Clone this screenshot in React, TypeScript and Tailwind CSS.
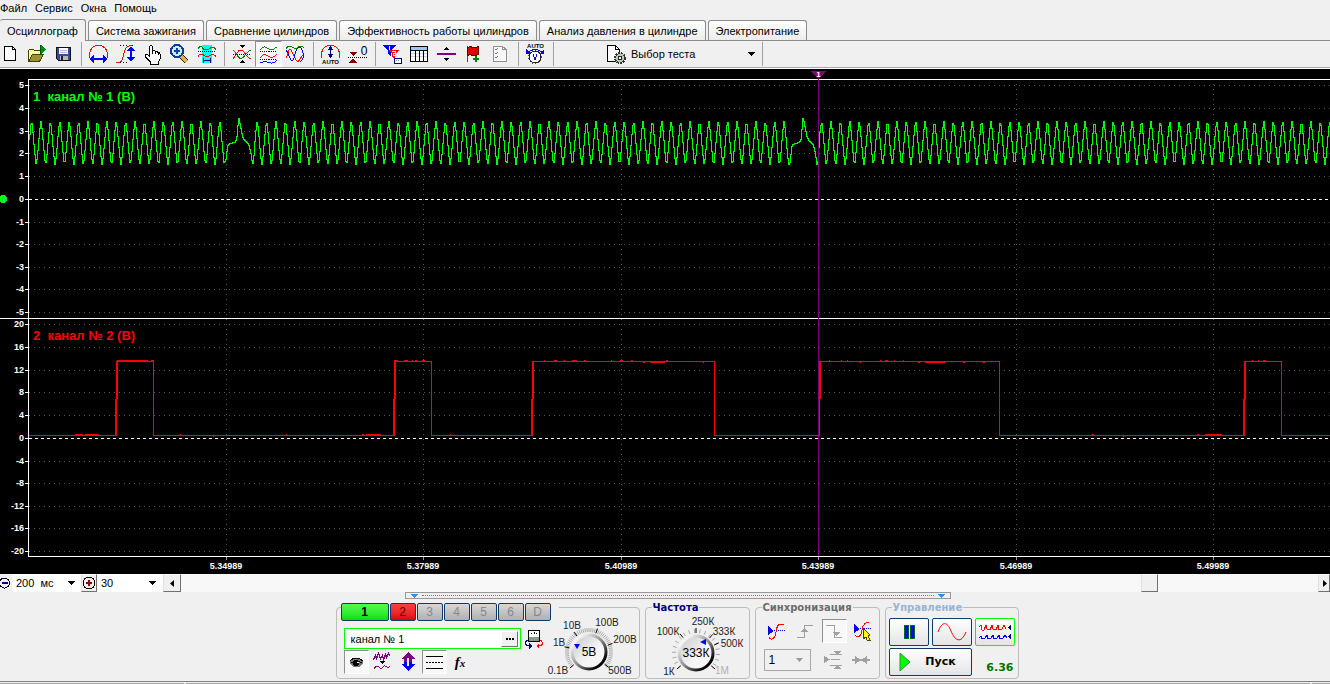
import React, { useState } from "react";
import clsx from "clsx";

type IconProps = { children: React.ReactNode; size?: number };

function Icon({ children, size = 26 }: IconProps) {
  return (
    <svg width={size} height={size} viewBox={`0 0 ${size} ${size}`} fill="none" shapeRendering="crispEdges" aria-hidden="true">
      {children}
    </svg>
  );
}

/* ---------- toolbar icons ---------- */

const NewIcon = () => (
  <Icon>
    <path d="M7.500 5.500h8l3 3v11h-11z" fill="#fff" stroke="#000" />
    <path d="M15.500 5.500v3h3" stroke="#000" />
  </Icon>
);

const OpenIcon = () => (
  <Icon>
    <path d="M4.500 20V9.500l1-1h4l1 1h6v4" fill="#ffffa0" stroke="#4a4000" />
    <path d="M4.500 20.500l4-7h11l-4 7z" fill="#9a9430" stroke="#4a4000" />
    <path d="M16.500 4v9" stroke="#005000" />
    <path d="M17 4l5 4.500-5 4.500z" fill="#008a20" />
  </Icon>
);

const SaveIcon = () => (
  <Icon>
    <path d="M5.500 6.500h14v13h-12l-2-2z" fill="#3a4a90" stroke="#101020" />
    <rect x="8" y="7" width="9" height="6" fill="#fff" />
    <path d="M9 9.500h7M9 11.500h7" stroke="#b0b8d0" />
    <rect x="9" y="15" width="8" height="4" fill="#b8b8b8" />
    <rect x="10" y="15" width="2" height="4" fill="#202020" />
  </Icon>
);

const HorizontalScaleIcon = () => (
  <Icon>
    <path d="M3.500 17V12.500Q5 4.500 12.500 4.500t9 8V17" stroke="#f00" />
    <path d="M6 18h13" stroke="#00f" strokeWidth="2" />
    <path d="M3 18l5-4v8zM22 18l-5-4v8z" fill="#00f" />
  </Icon>
);

const VerticalScaleIcon = () => (
  <Icon>
    <path d="M7 4.500h14M4 21.500h12" stroke="#000" strokeDasharray="1 2" />
    <path d="M3 21.500c7 0 6-2 7.500-8S13 4.500 19 4.500" stroke="#f00" />
    <path d="M18 8v11" stroke="#00f" strokeWidth="2" />
    <path d="M18 5l-4 5h8zM18 21l-4-5h8z" fill="#00f" />
  </Icon>
);

const HandIcon = () => (
  <Icon>
    <path
      d="M9.500 15V5.500l1-1h1l1 1V10l1.500-.5 1.500 1 1.500 0 1 1 1.500.5 1 1.500v4l-2 3.500v2h-8v-2l-5-5v-2l2-.5z"
      fill="#fff"
      stroke="#000"
    />
    <path d="M12.500 10v3M15.500 11v2M18.500 12v2" stroke="#000" />
  </Icon>
);

const ZoomIcon = () => (
  <Icon>
    <path d="M14 15l6 6" stroke="#302000" strokeWidth="5" />
    <path d="M14 15l6 6" stroke="#e0b050" strokeWidth="3" />
    <circle cx="10" cy="10" r="6" fill="#c8ecff" stroke="#123a9a" strokeWidth="2" />
    <path d="M10 7v6M7 10h6" stroke="#1440a0" strokeWidth="2" />
  </Icon>
);

const FitIcon = () => (
  <Icon>
    <rect x="8" y="4" width="10" height="18" fill="#0ff" />
    <path d="M4 7.500c2-3 4-2 5 0s5 2 7 0 4-2 6 1" stroke="#008000" />
    <path d="M4 10.500h18" stroke="#000" strokeDasharray="1 1" />
    <path d="M4 15.500c2-3 4-3 6-1s4 2 6 0 4-1 6 1" stroke="#f00" />
    <path d="M9 19.500h8M9.500 17v5M16.500 17v5" stroke="#000080" />
  </Icon>
);

const OverlayIcon = () => (
  <Icon>
    <path d="M4 17.500c3-1 4-9 8-8.500s5 8.500 10 8.500" stroke="#f00" />
    <path d="M4 9.500c3 0 4 8 8 8s5-8 10-8" stroke="#008000" />
    <path d="M4 13.500h18" stroke="#000" strokeDasharray="1 1" />
    <path d="M10 4h6l-3 3zM13 19l3 3h-6z" fill="#000" />
  </Icon>
);

const SeparateIcon = () => (
  <Icon>
    <path d="M4 8.500c2 0 3-3 5-3s4 3 7 3 4-2 6-3" stroke="#008000" />
    <path d="M4 16.500c2 0 3-3 5-3s4 3 7 3 4-2 6-3" stroke="#f00" />
    <path d="M4 22.500c2 0 3-2 5-2s4 2 7 2 4-2 6-3" stroke="#00f" />
    <path d="M4 10.500h18M4 18.500h18" stroke="#000" strokeDasharray="1 1" />
  </Icon>
);

const MixedIcon = () => (
  <Icon>
    <path d="M3 7.500c2-3 5-3 7-1s4 2 5 0 4-2 6 0" stroke="#008000" />
    <path d="M3 17c2-2 2-9 4-9s4 10 7 12 4-7 7-6" stroke="#f00" />
    <path d="M3 9c3 3 4 11 6 11s3-9 5-12 5-2 6 4-1 8-3 9" stroke="#00f" />
  </Icon>
);

const AutoScaleIcon = () => (
  <Icon>
    <path d="M3.500 17V12Q5 4.500 12.500 4.500t9 7.500V17" stroke="#f00" />
    <path d="M12.500 6v10" stroke="#000080" />
    <path d="M12.500 5l-3 4h6zM12.500 17l-3-4h6z" fill="#000080" />
    <text x="12.500" y="23" textAnchor="middle" fontSize="6" fontWeight="bold" fill="#000" fontFamily="Liberation Sans, sans-serif">AUTO</text>
  </Icon>
);

const ZeroIcon = () => (
  <Icon>
    <path d="M4 11h8l-4 4zM8 17l4 5H4z" fill="#800000" />
    <path d="M3 16.500h20" stroke="#000" strokeDasharray="1 1" />
    <text x="19" y="14" textAnchor="middle" fontSize="12" fill="#000" fontFamily="Liberation Sans, sans-serif">0</text>
  </Icon>
);

const FilterIcon = () => (
  <Icon>
    <path d="M3 4h13l-5 6v6l-3-4V10z" fill="#00f" />
    <path d="M9 9h10l-4 5v5l-3-3v-3z" fill="#f00" />
    <path d="M9.500 5v4M8.500 6.500h1" stroke="#fff" />
    <path d="M12 10.500h3v2h-2v2h3" stroke="#fff" />
    <path d="M14.500 17.500h7v5h-7z" fill="#fff" stroke="#000080" />
    <path d="M16 19.500h4" stroke="#888" strokeDasharray="1 1" />
  </Icon>
);

const TableIcon = () => (
  <Icon>
    <rect x="3.500" y="5.500" width="17" height="15" fill="#fff" stroke="#000" />
    <rect x="4" y="6" width="16" height="3" fill="#9cc4f4" />
    <path d="M4 12.500h16M4 15.500h16" stroke="#d0d0d0" />
    <path d="M4 9.500h16M8.500 9v11M12.500 9v11M16.500 9v11" stroke="#000" />
  </Icon>
);

const SplitIcon = () => (
  <Icon>
    <path d="M3 13h19" stroke="#800080" strokeWidth="2" />
    <path d="M12.500 6l3 3h-6zM12.500 20l3-3h-6z" fill="#000" />
  </Icon>
);

const FlagIcon = () => (
  <Icon>
    <path d="M6.500 5v16" stroke="#804000" />
    <path d="M6.500 6.500l3-1 2 1h3l3-1v8l-3 1h-3l-2-1-3 1z" fill="#e00000" stroke="#600000" />
    <path d="M15 15v6M12 18h6" stroke="#008000" strokeWidth="2" />
  </Icon>
);

const ChecklistIcon = () => (
  <Icon>
    <path d="M5.500 5.500h9l4 3v12h-13z" fill="#f8f8f8" stroke="#909090" />
    <path d="M14.500 5.500v3h4" stroke="#909090" />
    <path d="M7 8l1 1 2-2M7 12l1 1 2-2M7 16l1 1 2-2" stroke="#707070" />
  </Icon>
);

const AutoMeterIcon = () => (
  <Icon>
    <text x="12.500" y="7" textAnchor="middle" fontSize="6" fontWeight="bold" fill="#000" fontFamily="Liberation Sans, sans-serif">AUTO</text>
    <path d="M5 11Q12 6 19 11" stroke="#00f" />
    <path d="M3 8v5h5zM21 8v5h-5z" fill="#00f" />
    <circle cx="12" cy="16" r="6" fill="#fff" stroke="#222" />
    <circle cx="12" cy="16" r="6.500" stroke="#444" strokeDasharray="1 2" />
    <path d="M10 13.500l2 5 2-5" stroke="#00f" />
  </Icon>
);

const TestIcon = () => (
  <Icon>
    <path d="M4.500 4.500h8l4 4v12h-12z" fill="#fff" />
    <path d="M17 20.500H4.500v-16h8l4 4V12M12.500 4.500v4h4" stroke="#000" />
    <circle cx="17" cy="17" r="5" fill="#b8ccb8" />
    <circle cx="17" cy="17" r="5" stroke="#333" strokeDasharray="2 1" strokeWidth="2" />
    <circle cx="17" cy="17" r="2" fill="#fff" stroke="#222" />
  </Icon>
);

type Tool = { label: string; icon: React.FC; pressed?: boolean };

const toolGroups: Tool[][] = [
  [
    { label: "Новый", icon: NewIcon },
    { label: "Открыть", icon: OpenIcon },
    { label: "Сохранить", icon: SaveIcon },
  ],
  [
    { label: "Масштаб по горизонтали", icon: HorizontalScaleIcon },
    { label: "Масштаб по вертикали", icon: VerticalScaleIcon },
    { label: "Сдвиг", icon: HandIcon },
    { label: "Лупа", icon: ZoomIcon },
    { label: "Показать интервал", icon: FitIcon },
  ],
  [
    { label: "Наложить", icon: OverlayIcon },
    { label: "Разделить", icon: SeparateIcon, pressed: true },
    { label: "Совместить", icon: MixedIcon },
  ],
  [
    { label: "Автомасштаб", icon: AutoScaleIcon },
    { label: "Нулевая линия", icon: ZeroIcon },
  ],
  [
    { label: "Фильтр", icon: FilterIcon },
    { label: "Таблица", icon: TableIcon },
    { label: "Линейка", icon: SplitIcon },
    { label: "Добавить метку", icon: FlagIcon },
    { label: "Список", icon: ChecklistIcon },
  ],
  [{ label: "Автоизмерение", icon: AutoMeterIcon }],
];

function Separator() {
  return (
    <div className="flex w-2 shrink-0 justify-center py-px">
      <div className="w-px bg-[#a0a0a0]" />
    </div>
  );
}

function DownTriangle() {
  return (
    <svg width="7" height="4" viewBox="0 0 7 4" shapeRendering="crispEdges" aria-hidden="true">
      <path d="M0 0h7L3.500 4z" fill="currentColor" />
    </svg>
  );
}

/* ---------- chart ---------- */

const SPAN = 4000;
const CYCLE = 564.4;
const TOOTH = 9.41;

const gapShape: [number, number][] = [
  [-14, 161], [-13, 162], [-12, 153], [-11, 145], [-8, 143], [-4, 142], [-2, 139],
  [0, 117], [2, 126], [4, 137], [7, 141], [10, 144], [12, 151], [14, 165], [15, 160],
  [16, 145], [17, 131],
];

function sensorPath() {
  let d = "M29 70.5";
  for (let x = 29; x < SPAN; x++) {
    let u = (((x - 237.7) % CYCLE) + CYCLE) % CYCLE;
    if (u > CYCLE - 14) u -= CYCLE;
    let y = 142;
    if (u < 17) {
      for (let i = 1; i < gapShape.length; i++) {
        const [x0, y0] = gapShape[i - 1];
        const [x1, y1] = gapShape[i];
        if (u <= x1) {
          y = y0 + ((y1 - y0) * Math.max(0, u - x0)) / (x1 - x0);
          break;
        }
      }
    } else {
      const phase = (u - 18.500) / TOOTH;
      const frac = phase - Math.floor(phase);
      const triangle = Math.abs(frac - 0.5) * 4 - 1;
      y = 142.500 - 13 * triangle - 9 * Math.cos(phase * 2 * Math.PI);
    }
    d += `V${Math.round(y) - 69}.5H${x + 1}.5`;
  }
  return d;
}

const pulses: [number, number][] = [[116, 153], [394, 431], [532, 714], [819, 999], [1244, 1281]];

const noise: [number, number, number][] = [
  [75, 434, 8], [85, 434, 14], [180, 434, 1], [286, 434, 1], [213, 436, 1],
  [117, 360, 4], [122, 360, 26], [151, 360, 3],
  [362, 434, 2], [366, 434, 15], [450, 434, 1], [394, 360, 4], [404, 360, 4], [412, 360, 1], [415, 360, 2], [422, 360, 3],
  [544, 360, 1], [554, 360, 3], [564, 360, 1], [572, 360, 5], [584, 360, 2], [611, 360, 1], [620, 360, 3], [631, 360, 2],
  [643, 362, 2], [650, 362, 15], [666, 360, 2], [703, 362, 1],
  [829, 360, 1], [841, 360, 1], [847, 360, 1], [860, 362, 1], [880, 360, 1], [885, 360, 3], [894, 360, 1], [903, 360, 1],
  [918, 362, 2], [925, 362, 20], [963, 362, 2], [983, 362, 2],
  [1092, 434, 2], [1123, 436, 1], [1197, 434, 2], [1205, 434, 17], [1252, 360, 1], [1258, 360, 1], [1263, 360, 3],
];

const scaleTop: [number, string][] = [
  [85, "5"], [108, "4"], [131, "3"], [153, "2"], [176, "1"], [199, "0"],
  [222, "-1"], [244, "-2"], [267, "-3"], [289, "-4"], [312, "-5"],
];
const scaleBottom: [number, string][] = [
  [324, "20"], [347, "16"], [370, "12"], [392, "8"], [415, "4"], [438, "0"],
  [461, "-4"], [483, "-8"], [506, "-12"], [528, "-16"], [551, "-20"],
];
const times: [number, string][] = [
  [226, "5.34989"], [423, "5.37989"], [621, "5.40989"], [818, "5.43989"], [1016, "5.46989"], [1213, "5.49989"],
];

function Chart() {
  const bands = [...scaleTop, ...scaleBottom];
  let base = "M29 366.5";
  for (const [a, b] of pulses) base += `H${a}.5V292.5H${b}.5V366.5`;
  base += `H${SPAN}`;
  return (
    <svg
      id="scope"
      className="block h-[505px] w-full bg-black"
      shapeRendering="crispEdges"
      fontFamily="Liberation Sans, Arial, sans-serif"
      fontWeight="bold"
      role="img"
      aria-label="Осциллограмма"
    >
      <g stroke="#585858" strokeDasharray="1 4">
        {bands.filter(([, t]) => t !== "0").map(([y, t]) => (
          <line key={y + t} x1="29" x2="100%" y1={y - 68.500} y2={y - 68.500} />
        ))}
        {times.map(([x]) => (
          <line key={x} x1={x + 0.500} x2={x + 0.500} y1="15" y2="487" />
        ))}
      </g>
      <g stroke="#fff">
        <line x1="29" x2="100%" y1="130.500" y2="130.500" strokeDasharray="3 3" />
        <line x1="29" x2="100%" y1="369.500" y2="369.500" strokeDasharray="3 3" />
        <line x1="28" x2="100%" y1="10.500" y2="10.500" />
        <line x1="0" x2="100%" y1="249.500" y2="249.500" />
        <line x1="28" x2="100%" y1="487.500" y2="487.500" />
        <line x1="28.500" x2="28.500" y1="10" y2="488" />
        {bands.map(([y, t]) => (
          <line key={y + t} x1="25" x2="28" y1={y - 68.500} y2={y - 68.500} />
        ))}
      </g>
      {times.map(([x]) => (
        <line key={x} x1={x + 0.500} x2={x + 0.500} y1="488" y2="491" stroke="#999" />
      ))}
      <g fill="#fff" fontSize="9">
        {bands.map(([y, t]) => (
          <text key={y + t} x="24" y={y - 66} textAnchor="end">{t}</text>
        ))}
        {times.map(([x, t]) => (
          <text key={t} x={x} y="500" textAnchor="middle">{t}</text>
        ))}
      </g>
      <circle cx="3" cy="130" r="4" fill="#00ff20" />
      <path d={sensorPath()} fill="none" stroke="#0f0" />
      <path d={base} fill="none" stroke="#f00" />
      <g fill="#f00">
        {pulses.map(([x]) => (
          <g key={x}>
            <rect x={x - 1} y="330" width="2" height="37" />
            <rect x={x} y="292" width="2" height="38" />
          </g>
        ))}
        {noise.map(([x, y, w]) => (
          <rect key={`${x}-${y}`} x={x} y={y - 69} width={w} height="1" />
        ))}
      </g>
      <text x="33" y="32" fontSize="13" fill="#0f0" xmlSpace="preserve">1  канал № 1 (В)</text>
      <text x="33" y="271" fontSize="13" fill="#f00" xmlSpace="preserve">2  канал № 2 (В)</text>
      <line x1="818.500" x2="818.500" y1="8" y2="487" stroke="#800080" />
      <path d="M811 2h15l-7 8h-1z" fill="#800080" />
      <text x="818.500" y="8" fontSize="8" fill="#fff" textAnchor="middle">1</text>
    </svg>
  );
}

/* ---------- dials ---------- */

type DialLabel = { x: number; y: number; text: string; faded?: boolean };
type DialProps = {
  width: number;
  height: number;
  cx: number;
  cy: number;
  value: string;
  step: number;
  pointer: string;
  labels: DialLabel[];
  major: number[];
  name: string;
};

function Dial({ width, height, cx, cy, value, step, pointer, labels, major, name }: DialProps) {
  const ray = (deg: number, r1: number, r2: number) => {
    const a = (deg * Math.PI) / 180;
    return `M${cx + Math.sin(a) * r1} ${cy - Math.cos(a) * r1}L${cx + Math.sin(a) * r2} ${cy - Math.cos(a) * r2}`;
  };
  const minor: number[] = [];
  for (let d = -130; d <= 130; d += step) minor.push(d);
  return (
    <svg width={width} height={height} className="shrink-0" fontFamily="Liberation Sans, Arial, sans-serif" role="img" aria-label={`${name}: ${value}`}>
      <defs>
        <linearGradient id={`rim-${name}`} x1="0" y1="0" x2="1" y2="1">
          <stop offset="0.15" stopColor="#f4f4f4" />
          <stop offset="0.5" stopColor="#909090" />
          <stop offset="0.85" stopColor="#000" />
        </linearGradient>
        <linearGradient id={`face-${name}`} x1="0" y1="0" x2="1" y2="1">
          <stop offset="0.1" stopColor="#d0d0d0" />
          <stop offset="0.6" stopColor="#f6f6f6" />
        </linearGradient>
      </defs>
      <path d={minor.map((d) => ray(d, 20, 24)).join("")} stroke="#a8a8a8" />
      <path d={major.map((d) => ray(d, 20, 25)).join("")} stroke="#000" />
      <circle cx={cx} cy={cy} r="17" fill={`url(#face-${name})`} stroke={`url(#rim-${name})`} strokeWidth="3" />
      <path d={pointer} fill="#00f" />
      <text x={cx} y={cy + 4} fontSize="12" textAnchor="middle">{value}</text>
      <g fontSize="10">
        {labels.map((l) => (
          <text key={l.text} x={l.x} y={l.y} textAnchor="middle" fill={l.faded ? "#b0b0b0" : "#222"}>{l.text}</text>
        ))}
      </g>
    </svg>
  );
}

/* ---------- bottom panel ---------- */

function Group({ title, color, className, children }: { title: string; color: string; className: string; children: React.ReactNode }) {
  return (
    <section className={clsx("flex h-[72px] shrink-0 flex-col rounded border border-[#bcbcbc]", className)}>
      <h2 className={clsx("-mt-[6px] ml-1.5 w-fit bg-[#f0f0f0] px-px font-['DejaVu_Sans',sans-serif] text-[10px] leading-3 font-bold", color)}>{title}</h2>
      {children}
    </section>
  );
}

const pressedClass = "border border-t-[#909090] border-l-[#909090] border-r-white border-b-white bg-[#f8f8f8]";

function FlatButton({ label, pressed, children }: { label: string; pressed?: boolean; children: React.ReactNode }) {
  return (
    <button type="button" aria-label={label} aria-pressed={pressed} className={clsx("flex h-6 w-[25px] shrink-0 items-center justify-center", pressed && pressedClass)}>
      {children}
    </button>
  );
}

function ChannelGroup() {
  const [channel, setChannel] = useState("канал № 1");
  return (
    <section className="flex h-[72px] w-[304px] shrink-0 rounded border border-[#bcbcbc]">
      <div className="-mt-[5px] flex min-w-0 flex-1 flex-col pl-1">
        <div className="flex w-[218px] shrink-0 gap-px bg-[#f0f0f0]">
          {["1", "2", "3", "4", "5", "6", "D"].map((n) => (
            <button
              key={n}
              type="button"
              className={clsx(
                "h-[18px] rounded-[2px] border border-[#123a66] text-[12px] leading-4",
                n === "1" && "w-[48px] bg-linear-to-b from-[#50ff50] to-[#00e000] font-bold text-black",
                n === "2" && "w-[26px] bg-linear-to-b from-[#ff4040] to-[#e00000] text-[#500000]",
                n !== "1" && n !== "2" && "w-[26px] bg-linear-to-b from-[#d8d8d8] to-[#b0b0b0] text-[#888]",
              )}
            >
              {n}
            </button>
          ))}
        </div>
        <div className="mt-[7px] flex items-center gap-px pl-[3px]">
          <div className="flex h-[21px] w-[177px] shrink-0 items-center border border-[#0f0] bg-white pr-0.5">
            <input
              aria-label="Имя канала"
              value={channel}
              onChange={(e) => setChannel(e.target.value)}
              className="min-w-0 flex-1 px-1.5 text-[11px] outline-none"
            />
            <button type="button" aria-label="Настройка канала" className="flex h-4 w-[17px] items-center justify-center border border-t-white border-r-[#707070] border-b-[#707070] border-l-white bg-[#f0f0f0]">
              <svg width="9" height="2" shapeRendering="crispEdges" aria-hidden="true"><path d="M1 0h2v2H1zM4 0h2v2H4zM7 0h2v2H7z" /></svg>
            </button>
          </div>
          <button type="button" aria-label="Прибор" className="flex h-5 w-6 shrink-0 items-center justify-center">
            <Icon size={20}>
              <rect x="4.500" y="1.500" width="11" height="11" fill="#fff" stroke="#000" />
              <rect x="5" y="8" width="10" height="4" fill="#8a9a8a" />
              <path d="M7 5l1-1M10 3v2M13 5l-1-1" stroke="#000" />
              <path d="M4 11c-3 1-4 5 1 6" stroke="#000080" /><path d="M5 14v6l3-3z" fill="#000080" />
              <path d="M16 11c3 1 4 5-1 6" stroke="#f00" /><path d="M15 14v6l-3-3z" fill="#f00" />
            </Icon>
          </button>
        </div>
        <div className="mt-px flex gap-px pl-[3px]">
          <FlatButton label="Показать канал" pressed>
            <Icon size={20}>
              <path d="M4 9c3-4 9-4 13 0v3l-4 3H8l-4-3z" fill="#777" />
              <path d="M4 9c3-4 9-4 13 0M5 11c2-2 8-2 11 0" stroke="#000" />
              <circle cx="10" cy="11" r="3" fill="#000" />
              <rect x="11" y="10" width="2" height="1" fill="#fff" />
            </Icon>
          </FlatButton>
          <FlatButton label="Сглаживание">
            <Icon size={20}>
              <path d="M1.500 7l2-4 1 3 2-5 2 5 2-3 1 4 2-5 1 3 2-4 1 2M1.500 8l2-4 1 3 2-5 2 5 2-3 1 4 2-5 1 3 2-4 1 2" stroke="#800080" />
              <path d="M8 9h5l-2.500 3z" fill="#000" />
              <path d="M2 17c2-4 4-3 6-1s3-3 5-2 3 3 5 0" stroke="#800080" />
            </Icon>
          </FlatButton>
          <FlatButton label="Инвертировать">
            <Icon size={20}>
              <path d="M10 0l7 7h-3v3H6V7H3z" fill="#800080" /><path d="M10 19l7-7h-3v-2H6v2H3z" fill="#00f" />
              <path d="M10 6v8" stroke="#f0f0f0" strokeWidth="2" />
            </Icon>
          </FlatButton>
          <FlatButton label="Уровни" pressed>
            <Icon size={20}>
              <path d="M2 4.500h17M2 16.500h17" stroke="#000" />
              <path d="M2 10.500h17" stroke="#000" strokeDasharray="2 1" />
            </Icon>
          </FlatButton>
          <FlatButton label="Функция">
            <span className="font-['Liberation_Serif',serif] text-[15px] leading-4 font-bold italic">f<span className="text-[11px]">x</span></span>
          </FlatButton>
        </div>
      </div>
      <Dial
        name="Чувствительность"
        width={92}
        height={70}
        cx={42}
        cy={44}
        value="5В"
        step={5}
        major={[-130, -78, -37, 20, 70, 128]}
        pointer="M27 36h6l-3 5z"
        labels={[
          { x: 11, y: 66, text: "0.1В" },
          { x: 12, y: 38, text: "1В" },
          { x: 25, y: 21, text: "10В" },
          { x: 60, y: 18, text: "100В" },
          { x: 78, y: 35, text: "200В" },
          { x: 73, y: 66, text: "500В" },
        ]}
      />
    </section>
  );
}

function PlayButton({ label, className, children }: { label: string; className?: string; children: React.ReactNode }) {
  return (
    <button type="button" aria-label={label} className={clsx("flex h-7 w-10 items-center justify-center rounded-[2px] border bg-linear-to-b from-white to-[#e4e4e4]", className)}>
      {children}
    </button>
  );
}

const bevel = "border border-t-white border-l-[#e0e0e0] border-r-[#707070] border-b-[#707070] bg-[#f0f0f0]";

export default function App() {
  const tabs = ["Осциллограф", "Система зажигания", "Сравнение цилиндров", "Эффективность работы цилиндров", "Анализ давления в цилиндре", "Электропитание"];
  const [active, setActive] = useState(0);

  return (
    <div className="flex min-h-screen w-full flex-col overflow-hidden bg-[#f0f0f0] font-['Liberation_Sans',Arial,sans-serif] text-[11px] leading-[14px] text-black">
      <nav className="flex h-[19px] gap-2">
        {["Файл", "Сервис", "Окна", "Помощь"].map((m) => (
          <button key={m} type="button" className="h-[15px]">{m}</button>
        ))}
      </nav>

      <div role="tablist" className="flex h-[22px] items-end gap-0.5 border-b border-[#8c8c8c]">
        {tabs.map((t, i) => (
          <button
            key={t}
            type="button"
            role="tab"
            aria-selected={i === active}
            onClick={() => setActive(i)}
            className={clsx(
              "rounded-t-[3px] border border-b-0 border-[#8c8c8c] whitespace-nowrap",
              i === active ? "-mb-px h-[22px] border-l-0 bg-[#f0f0f0] px-[7px]" : "h-5 bg-linear-to-b from-white to-[#ececec] px-[7px]",
            )}
          >
            {t}
          </button>
        ))}
      </div>

      <div role="toolbar" aria-label="Инструменты" className="-ml-1 flex h-[26px]">
        {toolGroups.map((g, gi) => (
          <React.Fragment key={gi}>
            {g.map(({ label, icon: Glyph, pressed }) => (
              <button key={label} type="button" aria-label={label} aria-pressed={pressed} className={clsx("flex w-[27px] shrink-0 items-center justify-center", pressed && pressedClass)}>
                <Glyph />
              </button>
            ))}
            <Separator />
          </React.Fragment>
        ))}
        <button type="button" aria-haspopup="menu" className="flex w-[201px] items-center pr-[3px] pl-[46px]">
          <TestIcon />
          <span className="flex-1 pl-0.5 text-left">Выбор теста</span>
          <DownTriangle />
        </button>
        <Separator />
      </div>
      <div className="h-0.5 border-t border-[#a8a8a8] bg-white" />

      <Chart />

      <div className="flex h-[18px] bg-white">
        <button type="button" aria-label="Уменьшить развёртку" className="flex w-3 items-center justify-end bg-[#f0f0f0]">
          <Icon size={12}><circle cx="4.500" cy="6" r="5" stroke="#000" fill="#f0f0f0" /><path d="M2 6h6" stroke="#000080" strokeWidth="2" /></Icon>
        </button>
        <button type="button" aria-label="Развёртка" className="flex w-[69px] items-center justify-between pr-1.5 pl-1">
          <span className="whitespace-pre">200  мс</span>
          <DownTriangle />
        </button>
        <button type="button" aria-label="Увеличить развёртку" className={clsx("flex w-4 items-center justify-center", bevel)}>
          <Icon size={14}><circle cx="7" cy="7" r="6" stroke="#000" /><path d="M4 7h6M7 4v6" stroke="#900000" strokeWidth="2" /></Icon>
        </button>
        <button type="button" aria-label="Число кадров" className="flex w-[66px] items-center justify-between pr-[7px] pl-1">
          <span>30</span>
          <DownTriangle />
        </button>
        <div role="scrollbar" aria-label="Прокрутка" aria-controls="scope" aria-valuenow={86} className="flex flex-1 bg-[#f8f8f8]">
          <button type="button" aria-label="Назад" className={clsx("flex w-[18px] items-center justify-center", bevel)}>
            <svg width="4" height="7" aria-hidden="true"><path d="M4 0v7L0 3.500z" /></svg>
          </button>
          <div className="flex-[960]" />
          <div className={clsx("w-[17px]", bevel)} />
          <div className="flex-[160]" />
          <button type="button" aria-label="Вперёд" className={clsx("flex w-3 items-center justify-end pr-0.5", bevel)}>
            <svg width="4" height="7" aria-hidden="true"><path d="M0 0v7l4-3.500z" /></svg>
          </button>
        </div>
      </div>

      <div className="flex justify-center pl-[26px]">
        <div className="flex h-[7px] w-[546px] items-center justify-between border border-[#989898] px-[5px] text-[#3090f0]">
          <DownTriangle />
          <div className="mx-1 flex-1 border-t border-dotted border-[#3090f0]" />
          <DownTriangle />
        </div>
      </div>

      <div className="mt-2 flex justify-center gap-[5px] pl-6">
        <ChannelGroup />

        <Group title="Частота" color="text-[#000080]" className="w-[105px]">
          <Dial
            name="Частота"
            width={103}
            height={64}
            cx={50}
            cy={39}
            value="333К"
            step={14}
            major={[-130, -40, 0, 42, 66, 130]}
            pointer="M54 28l6-3v6z"
            labels={[
              { x: 22, y: 21, text: "100К" },
              { x: 57, y: 11, text: "250К" },
              { x: 78, y: 21, text: "333К" },
              { x: 86, y: 33, text: "500К" },
              { x: 23, y: 61, text: "1К" },
              { x: 76, y: 60, text: "1М", faded: true },
            ]}
          />
        </Group>

        <Group title="Синхронизация" color="text-[#6c6c6c]" className="w-[125px]">
          <div className="mt-[5px] flex gap-1 pl-2">
            <FlatButton label="Синхронизация по уровню">
              <Icon size={20}>
                <path d="M2 5l6 5-6 4z" fill="#00f" /><path d="M8 9.500h11" stroke="#00f" strokeDasharray="1 1" />
                <path d="M3 16c2 4 6 2 7-5s2-8 8-8" stroke="#f00" />
              </Icon>
            </FlatButton>
            <FlatButton label="По фронту">
              <Icon size={20}><path d="M2 16.500h7.500v-12H18M9.500 4v8" stroke="#a0a0a0" /><path d="M9.500 7l4 4h-8z" fill="#a0a0a0" /></Icon>
            </FlatButton>
            <FlatButton label="По спаду" pressed>
              <Icon size={20}><path d="M2 4.500h8.500v12H18" stroke="#a0a0a0" /><path d="M12.500 15l-4-4h8z" fill="#a0a0a0" /></Icon>
            </FlatButton>
            <FlatButton label="Выбрать уровень">
              <Icon size={20}>
                <path d="M1 3l6 5-6 4z" fill="#00f" /><path d="M7 7.500h12" stroke="#00f" strokeDasharray="1 1" />
                <path d="M2 14c3 4 6 1 7-5s3-8 7-8" stroke="#f00" />
                <path d="M10 7l7 7-2 1 2 4h-3l-1-3-3 2z" fill="#ff0" stroke="#504000" />
              </Icon>
            </FlatButton>
          </div>
          <div className="mt-[5px] flex items-center pl-2">
            <select aria-label="Канал синхронизации" className="mr-2.5 h-[22px] w-[47px] appearance-none border border-[#a8a8a8] bg-[url('data:image/svg+xml,%3Csvg%20xmlns=%22http://www.w3.org/2000/svg%22%20width=%227%22%20height=%224%22%3E%3Cpath%20d=%22M0%200h7L3.5%204z%22%20fill=%22%23999%22/%3E%3C/svg%3E')] bg-[right_7px_center] bg-no-repeat px-1 text-[12px]">
              <option>1</option>
            </select>
            <FlatButton label="Уровень">
              <Icon size={20}><path d="M7 4.500h12M7 15.500h12M8 9.500h9" stroke="#a0a0a0" /><path d="M1 6l6 3.500L1 13zM11 1h7l-3.500 4zM11 19h7l-3.500-4z" fill="#a0a0a0" /></Icon>
            </FlatButton>
            <span className="ml-[3px]">
              <FlatButton label="Центр">
                <Icon size={20}><path d="M1 10h18" stroke="#a0a0a0" strokeWidth="2" /><path d="M4 6l6 4-6 4zM16 6l-6 4 6 4z" fill="#a0a0a0" /></Icon>
              </FlatButton>
            </span>
          </div>
        </Group>

        <Group title="Управление" color="text-[#9ab4d4]" className="w-[134px]">
          <div className="mt-1 flex gap-[3px] pl-[3px]">
            <PlayButton label="Пауза" className="border-[#123a66]">
              <svg width="12" height="16" shapeRendering="crispEdges" aria-hidden="true">
                <rect x="1" y="1" width="4" height="13" fill="#00f" stroke="#006030" /><rect x="7" y="1" width="4" height="13" fill="#00f" stroke="#006030" />
              </svg>
            </PlayButton>
            <PlayButton label="Одиночный" className="border-[#123a66]">
              <svg width="30" height="22" fill="none" aria-hidden="true"><path d="M1 11C5 0 10 0 14 10s10 13 15 1" stroke="#f00" /></svg>
            </PlayButton>
            <PlayButton label="Непрерывный" className="border-[#0f0]">
              <svg width="34" height="22" fill="none" shapeRendering="crispEdges" aria-hidden="true">
                <path d="M1 6l2-2 1 5h2l2-5 1 4 3 1 2-5 1 4 3 1 2-5 1 5 3-1 2-4 2 4" stroke="#f00" />
                <path d="M1 17l2-2 1 3 3-1 2-3 1 4 3-1 2-3 1 4 3-1 2-3 1 4 3-1 2-3 2 3" stroke="#00f" />
                <path d="M33 3v7l-3-3.500zM33 12v7l-3-3.500z" fill="#000080" />
              </svg>
            </PlayButton>
          </div>
          <div className="mt-0.5 flex items-end justify-between pr-1 pl-[3px]">
            <button type="button" className="flex h-7 w-[83px] items-center rounded-[2px] border border-[#123a66] bg-linear-to-b from-white to-[#e4e4e4] pl-[9px] font-['DejaVu_Sans',sans-serif] text-[11px] font-bold">
              <svg width="12" height="18" aria-hidden="true"><path d="M1 0l10 9-10 9z" fill="#0f0" stroke="#309030" /></svg>
              <span className="flex-1 text-center">Пуск</span>
            </button>
            <output className="font-['DejaVu_Sans',sans-serif] text-[11px] leading-4 font-bold text-[#007000]">6.36</output>
          </div>
        </Group>
      </div>

      <footer className="mt-auto">
        <div className="h-px bg-[#808080]" />
        <div className="mt-px flex gap-0.5">
          <div className="h-px w-[184px] bg-[#a8a8a8]" />
          <div className="h-px flex-1 bg-[#a8a8a8]" />
          <div className="h-px w-[18px] bg-[#a8a8a8]" />
        </div>
      </footer>
    </div>
  );
}
